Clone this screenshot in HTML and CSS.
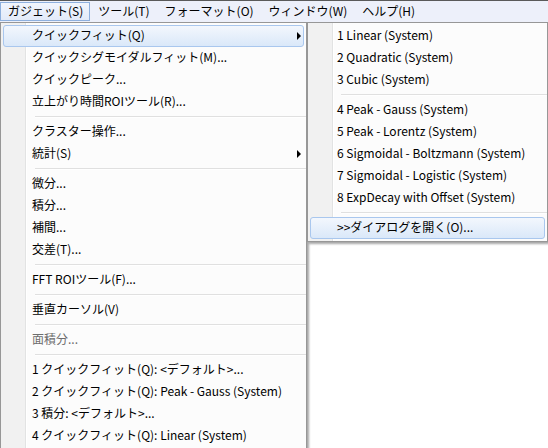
FILE: index.html
```html
<!DOCTYPE html>
<html lang="ja">
<head>
<meta charset="utf-8">
<title>ガジェット メニュー</title>
<link rel="stylesheet" href="styles.css">
</head>
<body>
<div class="menubar">
  <div class="bar-item active">ガジェット(S)</div>
  <div class="bar-item">ツール(T)</div>
  <div class="bar-item">フォーマット(O)</div>
  <div class="bar-item">ウィンドウ(W)</div>
  <div class="bar-item">ヘルプ(H)</div>
</div>
<div class="menus">
  <div class="menu menu-main">
    <div class="item hot"><span>クイックフィット(Q)</span><span class="arrow"></span></div>
    <div class="item"><span>クイックシグモイダルフィット(M)...</span></div>
    <div class="item"><span>クイックピーク...</span></div>
    <div class="item"><span>立上がり時間ROIツール(R)...</span></div>
    <div class="sep"></div>
    <div class="item"><span>クラスター操作...</span></div>
    <div class="item"><span>統計(S)</span><span class="arrow"></span></div>
    <div class="sep"></div>
    <div class="item"><span>微分...</span></div>
    <div class="item"><span>積分...</span></div>
    <div class="item"><span>補間...</span></div>
    <div class="item"><span>交差(T)...</span></div>
    <div class="sep"></div>
    <div class="item"><span>FFT ROIツール(F)...</span></div>
    <div class="sep"></div>
    <div class="item"><span>垂直カーソル(V)</span></div>
    <div class="sep"></div>
    <div class="item disabled"><span>面積分...</span></div>
    <div class="sep"></div>
    <div class="item"><span>1 クイックフィット(Q): &lt;デフォルト&gt;...</span></div>
    <div class="item"><span>2 クイックフィット(Q): Peak - Gauss (System)</span></div>
    <div class="item"><span>3 積分: &lt;デフォルト&gt;...</span></div>
    <div class="item"><span>4 クイックフィット(Q): Linear (System)</span></div>
  </div>
  <div class="menu menu-sub">
    <div class="item"><span>1 Linear (System)</span></div>
    <div class="item"><span>2 Quadratic (System)</span></div>
    <div class="item"><span>3 Cubic (System)</span></div>
    <div class="sep"></div>
    <div class="item"><span>4 Peak - Gauss (System)</span></div>
    <div class="item"><span>5 Peak - Lorentz (System)</span></div>
    <div class="item"><span>6 Sigmoidal - Boltzmann (System)</span></div>
    <div class="item"><span>7 Sigmoidal - Logistic (System)</span></div>
    <div class="item"><span>8 ExpDecay with Offset (System)</span></div>
    <div class="sep"></div>
    <div class="item hot"><span>&gt;&gt;ダイアログを開く(O)...</span></div>
  </div>
</div>
</body>
</html>
```

FILE: styles.css
```css
html, body {
  margin: 0;
  padding: 0;
}

body {
  width: 548px;
  height: 448px;
  overflow: hidden;
  background: #ffffff;
  color: #000000;
  font-family: "Noto Sans CJK JP", "Segoe UI", sans-serif;
  font-size: 12px;
}

.menubar {
  display: flex;
  align-items: center;
  height: 21px;
  border-top: 1px solid #5a5a5a;
  background: #edf0fa;
}

.bar-item {
  box-sizing: border-box;
  height: 19px;
  line-height: 15px;
  padding: 0 6px 2px 7px;
  border: 1px solid transparent;
  white-space: nowrap;
}

.bar-item.active {
  border-color: #8eb0de;
  background: linear-gradient(#f1f5fd, #e2eaf9);
}

.menus {
  display: flex;
  align-items: flex-start;
}

.menu {
  box-sizing: border-box;
  padding: 2px 0;
  border: 1px solid #979797;
  box-shadow: 2px 2px 2px rgba(0, 0, 0, 0.35);
  background: linear-gradient(to right,
    #f1f1f1 0 24px,
    #e2e3e3 24px 25px,
    #ffffff 25px 26px,
    #fcfcfc 26px);
}

.menu-main {
  width: 307px;
}

.menu-sub {
  width: 241px;
}

.item {
  box-sizing: border-box;
  display: flex;
  align-items: center;
  height: 22px;
  margin: 0 2px;
  padding: 0 2px 4px 28px;
  border: 1px solid transparent;
  border-radius: 3px;
  white-space: nowrap;
}

.menu-sub .item {
  padding-left: 26px;
}

.item.hot {
  border-color: #a9c7ee;
  background: linear-gradient(#f3f7fd, #dae8f9);
}

.item.disabled {
  color: #6d6d6d;
}

.arrow {
  margin-left: auto;
  margin-top: 4px;
  width: 0;
  height: 0;
  border-left: 4px solid #000000;
  border-top: 4px solid transparent;
  border-bottom: 4px solid transparent;
}

.sep {
  display: flex;
  align-items: center;
  height: 8px;
  padding-left: 34px;
}

.menu-sub .sep {
  padding-left: 33px;
}

.sep::before {
  content: "";
  flex: 1;
  height: 0;
  border-top: 1px solid #e0e0e0;
  border-bottom: 1px solid #ffffff;
}
```
